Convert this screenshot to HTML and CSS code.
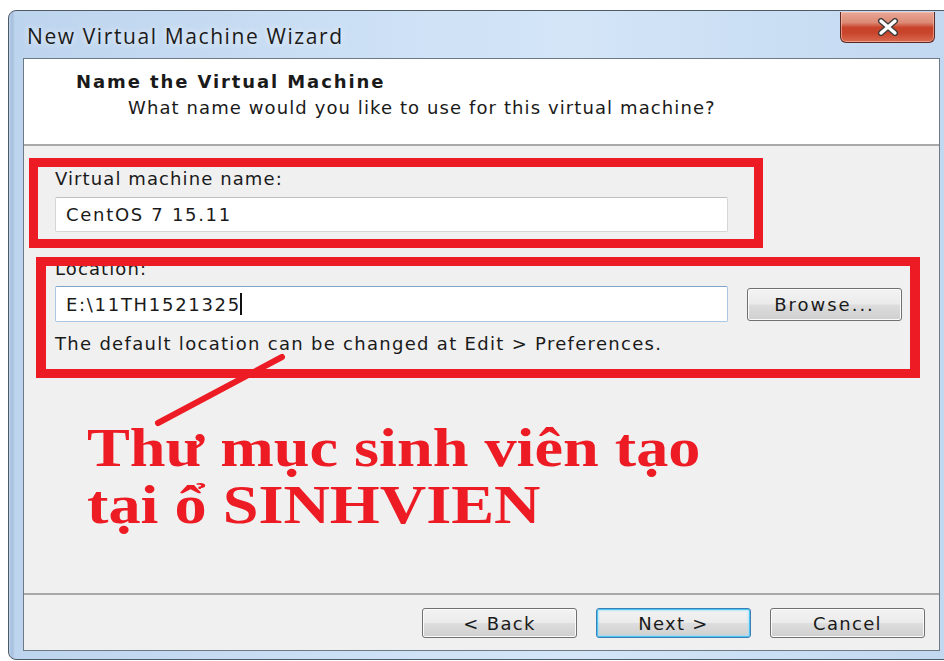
FILE: index.html
```html
<!DOCTYPE html>
<html lang="vi">
<head>
<meta charset="utf-8">
<title>New Virtual Machine Wizard</title>
<link rel="stylesheet" href="styles.css">
</head>
<body>
<div class="window">
  <div class="titlebar">
    <span class="title">New Virtual Machine Wizard</span>
    <button class="close" aria-label="Close">
      <svg width="30" height="18" viewBox="0 0 30 18">
        <path d="M8 3 L22 15 M22 3 L8 15" stroke="#3a3a3a" stroke-width="6" stroke-linecap="round"/>
        <path d="M8 3 L22 15 M22 3 L8 15" stroke="#ffffff" stroke-width="3.4" stroke-linecap="round"/>
      </svg>
    </button>
  </div>
  <div class="client">
    <div class="header">
      <div class="head-title">Name the Virtual Machine</div>
      <div class="head-sub">What name would you like to use for this virtual machine?</div>
    </div>
    <div class="body">
      <div class="field">
        <label class="label" for="vmname">Virtual machine name:</label>
        <div class="input">CentOS 7 15.11</div>
      </div>
      <div class="field">
        <label class="label" for="loc">Location:</label>
        <div class="row">
          <div class="input focused">E:\11TH1521325<span class="caret"></span></div>
          <button class="btn browse">Browse...</button>
        </div>
        <div class="note">The default location can be changed at Edit &gt; Preferences.</div>
      </div>
    </div>
    <div class="footer">
      <button class="btn">&lt; Back</button>
      <button class="btn default">Next &gt;</button>
      <button class="btn">Cancel</button>
    </div>

    <!-- red markup drawn over the dialog -->
    <div class="mark mark-name"></div>
    <div class="mark mark-loc"></div>
    <svg class="pointer" width="160" height="90" viewBox="0 0 160 90">
      <path d="M152 8 L28 74" stroke="#ed1c24" stroke-width="6" stroke-linecap="round"/>
    </svg>
    <div class="note-red">Thư mục sinh viên tạo<br>tại ổ SINHVIEN</div>
  </div>
</div>
</body>
</html>
```
FILE: styles.css
```css
html, body {
  margin: 0;
  padding: 0;
  background: #ffffff;
  overflow: hidden;
  width: 944px;
  height: 661px;
}

.window {
  margin: 10px 0 0 8px;
  width: 946px;
  height: 650px;
  box-sizing: border-box;
  border: 1px solid #4e5a66;
  border-radius: 8px 8px 0 8px;
  background:
    linear-gradient(90deg, rgba(255,255,255,0) 0, rgba(120,150,190,0.35) 3px, rgba(255,255,255,0) 6px, rgba(255,255,255,0) 100%),
    linear-gradient(90deg, #bdd4ee 0%, #cfe2f6 45%, #d3e5f7 60%, #c2d8f0 100%);
  display: flex;
  flex-direction: column;
  padding: 0 13px 8px 14px;
  position: relative;
}

.titlebar {
  height: 47px;
  display: flex;
  align-items: flex-start;
  position: relative;
}

.title {
  font-family: "Open Sans", "DejaVu Sans", sans-serif;
  font-size: 21px;
  color: #1b1b1b;
  margin: 11px 0 0 4px;
  letter-spacing: 1.6px;
  text-shadow: 0 0 6px rgba(255,255,255,0.9);
}

.close {
  position: absolute;
  right: 5px;
  top: 1px;
  width: 95px;
  height: 31px;
  border: 1px solid #5a2a22;
  border-top: none;
  border-radius: 0 0 6px 6px;
  background: linear-gradient(180deg, #e9a897 0%, #dc8a75 35%, #c8432a 52%, #c8452c 70%, #d96a4f 100%);
  box-shadow: inset 0 0 0 1px rgba(255,200,190,0.55);
  padding: 0;
  display: flex;
  align-items: center;
  justify-content: center;
}

.client {
  flex: 1;
  background: #f0f0f0;
  border: 1px solid #6d7a86;
  display: flex;
  flex-direction: column;
  position: relative;
  font-family: "DejaVu Sans", sans-serif;
  color: #1a1a1a;
}

.header {
  height: 87px;
  background: #ffffff;
  border-bottom: 2px solid #a9a9a9;
  box-sizing: border-box;
  padding: 12px 0 0 52px;
}

.head-title {
  font-weight: bold;
  font-size: 18px;
  letter-spacing: 1.9px;
  line-height: 22px;
}

.head-sub {
  font-size: 18px;
  letter-spacing: 1.1px;
  line-height: 22px;
  margin: 4px 0 0 52px;
}

.body {
  flex: 1;
  padding: 22px 0 0 31px;
  font-size: 18px;
  letter-spacing: 1.1px;
}

.label {
  display: block;
  line-height: 22px;
  height: 22px;
}

.field + .field {
  margin-top: 26px;
}

.input {
  width: 673px;
  height: 35px;
  box-sizing: border-box;
  margin-top: 7px;
  background: #ffffff;
  border: 1px solid #d6d6d6;
  border-top-color: #bfbfbf;
  border-radius: 2px;
  padding: 0 0 0 10px;
  letter-spacing: 1.7px;
  display: flex;
  align-items: center;
}

.input.focused {
  border-color: #a9c7e0;
  border-top-color: #7fa6c8;
  height: 36px;
  margin-top: 6px;
}

.caret {
  display: inline-block;
  width: 2px;
  height: 22px;
  background: #111;
  margin-left: -1px;
}

.row {
  display: flex;
  align-items: flex-start;
  gap: 19px;
}

.note {
  margin-top: 11px;
  line-height: 22px;
  letter-spacing: 1.3px;
}

.btn {
  font-family: "DejaVu Sans", sans-serif;
  font-size: 18px;
  letter-spacing: 1.3px;
  color: #1a1a1a;
  width: 155px;
  height: 30px;
  padding: 0;
  border: 1px solid #707070;
  border-radius: 3px;
  background: linear-gradient(180deg, #f3f3f3 0%, #ebebeb 48%, #dddddd 52%, #cfcfcf 100%);
  box-shadow: inset 0 0 0 1px #fbfbfb;
}

.browse {
  height: 33px;
  margin-top: 8px;
  letter-spacing: 2px;
}

.btn.default {
  border-color: #3c7fb1;
  box-shadow: inset 0 0 0 1px #48c4f7, inset 0 0 2px 2px rgba(160,220,250,0.6);
}

.footer {
  height: 57px;
  box-sizing: border-box;
  border-top: 2px solid #a9a9a9;
  display: flex;
  justify-content: flex-end;
  gap: 19px;
  padding: 13px 14px 0 0;
}

.mark {
  position: absolute;
  border: 9px solid #ed1c24;
  box-sizing: border-box;
}

.mark-name {
  left: 5px;
  top: 99px;
  width: 734px;
  height: 90px;
}

.mark-loc {
  left: 12px;
  top: 198px;
  width: 884px;
  height: 121px;
  border-width: 9px 10px 9px 10px;
}

.pointer {
  position: absolute;
  left: 106px;
  top: 290px;
}

.note-red {
  position: absolute;
  left: 63px;
  top: 361px;
  font-family: "Liberation Serif", "Times New Roman", serif;
  font-weight: bold;
  font-size: 54px;
  line-height: 57px;
  color: #ed1c24;
  white-space: nowrap;
  transform: scaleX(1.19);
  transform-origin: left top;
}
```
